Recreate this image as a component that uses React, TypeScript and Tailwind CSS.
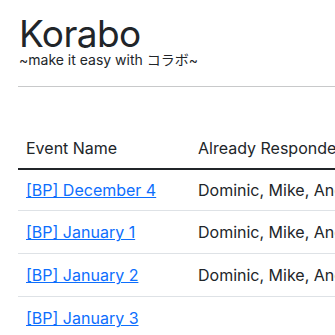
const events = [
  { name: '[BP] December 4', responded: 'Dominic, Mike, Andrew' },
  { name: '[BP] January 1', responded: 'Dominic, Mike, Andrew' },
  { name: '[BP] January 2', responded: 'Dominic, Mike, Andrew' },
  { name: '[BP] January 3', responded: '' },
];

const App = () => {
  return (
    <div className="w-[335px] h-[335px] overflow-hidden bg-white text-[#212529] font-['Inter','Noto_Sans_CJK_JP',sans-serif]">
      <div className="w-[700px] pl-[18px] pt-[12px]">
        {/* Header */}
        <div className="pl-px">
          <h1 className="text-[37px] leading-[44px] font-normal tracking-[-0.6px]">Korabo</h1>
          <p className="text-sm leading-[16px] -mt-[4px]">~make it easy with コラボ~</p>
        </div>
        <hr className="mt-[18px] border-t border-[#c8c9ca]" />

        {/* Events table */}
        <table className="mt-[40px] w-full border-collapse text-base">
          <thead>
            <tr className="border-b-2 border-[#212529]">
              <th className="w-[172px] px-2 pt-[9px] pb-[8px] text-left font-normal leading-6">Event Name</th>
              <th className="px-2 pt-[9px] pb-[8px] text-left font-normal leading-6">Already Responded</th>
            </tr>
          </thead>
          <tbody>
            {events.map((ev, i) => (
              <tr key={ev.name} className="border-b border-[#dee2e6]">
                <td className={`px-2 leading-6 ${i === 0 ? 'py-[8px]' : 'py-[9px]'}`}>
                  <a href="#" className="text-[#0d6efd] underline">{ev.name}</a>
                </td>
                <td className={`px-2 leading-6 ${i === 0 ? 'py-[8px]' : 'py-[9px]'}`}>{ev.responded}</td>
              </tr>
            ))}
          </tbody>
        </table>
      </div>
    </div>
  );
};

export default App;
